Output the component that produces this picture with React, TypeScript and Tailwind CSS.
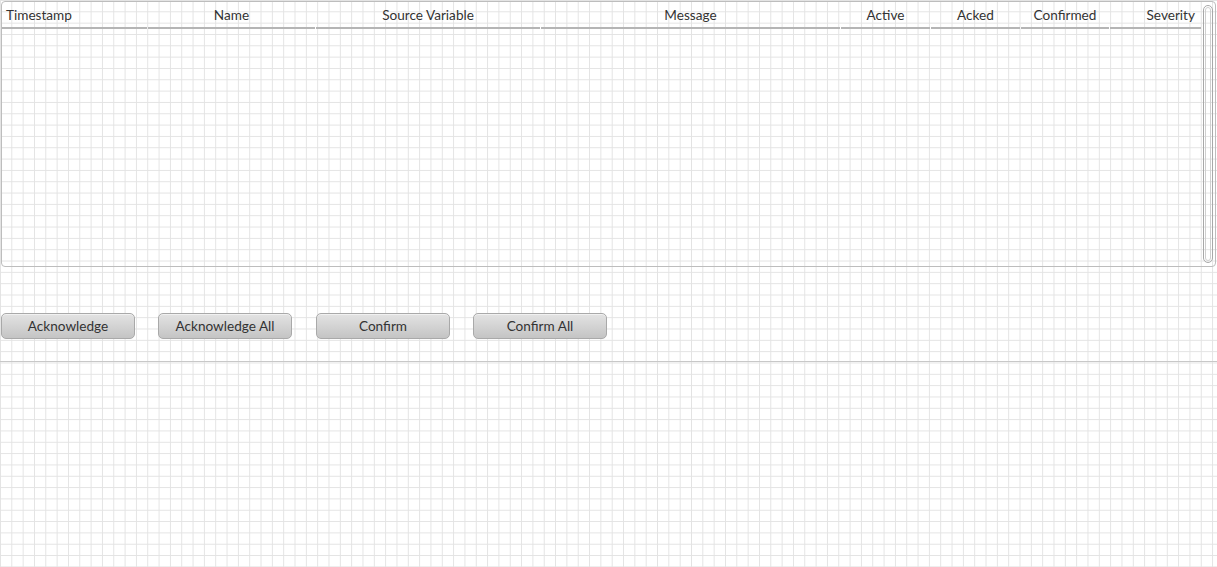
import React from "react";

const columns = [
  { label: "Timestamp", width: "w-[145px]", align: "text-left pl-[4px]" },
  { label: "Name", width: "w-[167px]", align: "text-center" },
  { label: "Source Variable", width: "w-[224px]", align: "text-center" },
  { label: "Message", width: "w-[299px]", align: "text-center" },
  { label: "Active", width: "w-[89px]", align: "text-center" },
  { label: "Acked", width: "w-[89px]", align: "text-center" },
  { label: "Confirmed", width: "w-[88px]", align: "text-center" },
  { label: "Severity", width: "w-[91px]", align: "text-right pr-[6px]" },
];

const buttons = ["Acknowledge", "Acknowledge All", "Confirm", "Confirm All"];

const App = () => {
  return (
    <div className="w-[1217px] h-[567px] overflow-hidden bg-white bg-[linear-gradient(to_right,#e3e3e3_1px,transparent_1px),linear-gradient(to_bottom,#e3e3e3_1px,transparent_1px)] bg-[size:11.33px_11.33px] font-['Lato','Liberation_Sans',sans-serif] text-[13.6px] text-[#333]">
      {/* Alarm table */}
      <div className="mx-[1px] mt-[1px] h-[266px] rounded-[4px] border border-[#bdbdbd] flex">
        <div className="w-[1200px] shrink-0 flex flex-col">
          <div className="flex gap-[1px] h-[27px]">
            {columns.map((c) => (
              <div
                key={c.label}
                className={`${c.width} ${c.align} shrink-0 border-b-2 border-[#b5b5b5] leading-[26px] whitespace-nowrap`}
              >
                {c.label}
              </div>
            ))}
          </div>
          <div className="flex-1" />
        </div>
        {/* Scrollbar */}
        <div className="w-[12px] shrink-0 py-[3px] pl-[1px]">
          <div className="h-full w-[10px] rounded-[6px] border border-[#a8a8a8] p-[1px]">
            <div className="h-full rounded-[5px] border border-[#cfcfcf]" />
          </div>
        </div>
      </div>

      {/* Actions */}
      <div className="flex mt-[46px] pl-[1px]">
        {buttons.map((b, i) => (
          <button
            key={b}
            className={`${i === 0 ? "" : i === 2 ? "ml-[24px]" : "ml-[23px]"} w-[134px] h-[26px] pt-[2px] rounded-[5px] border border-[#a9a9a9] bg-[linear-gradient(to_bottom,#e3e3e3,#c4c4c4)] text-[13.6px] text-[#333] leading-none shadow-[inset_0_1px_0_rgba(255,255,255,0.5)]`}
          >
            {b}
          </button>
        ))}
      </div>

      <div className="mt-[22px] border-t border-[#c8c8c8]" />
    </div>
  );
};

export default App;
